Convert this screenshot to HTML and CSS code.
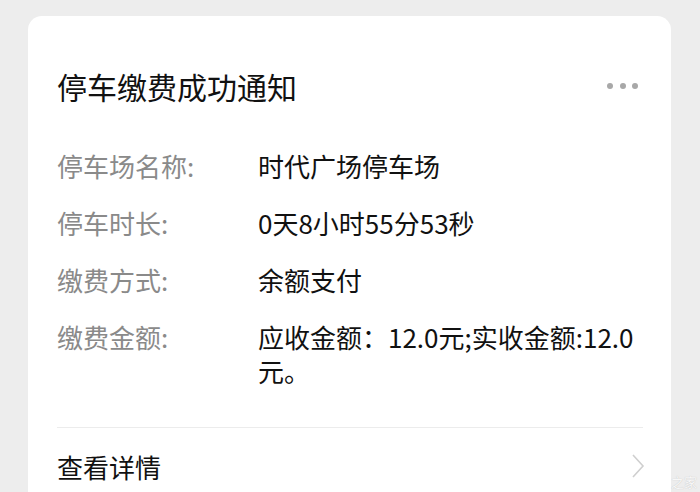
FILE: index.html
```html
<!DOCTYPE html>
<html lang="zh-CN">
<head>
    <meta charset="UTF-8">
    <meta name="viewport" content="width=device-width, initial-scale=1.0">
    <title>停车缴费成功通知</title>
    <link rel="stylesheet" href="styles.css">
</head>
<body>
    <div class="card">
        <div class="card-header">
            <h1>停车缴费成功通知</h1>
            <div class="more">
                <span></span><span></span><span></span>
            </div>
        </div>

        <div class="info-list">
            <div class="info-row">
                <div class="info-label">停车场名称:</div>
                <div class="info-value">时代广场停车场</div>
            </div>
            <div class="info-row">
                <div class="info-label">停车时长:</div>
                <div class="info-value">0天8小时55分53秒</div>
            </div>
            <div class="info-row">
                <div class="info-label">缴费方式:</div>
                <div class="info-value">余额支付</div>
            </div>
            <div class="info-row">
                <div class="info-label">缴费金额:</div>
                <div class="info-value">应收金额：12.0元;实收金额:12.0元。</div>
            </div>
        </div>

        <div class="card-footer">
            <span>查看详情</span>
            <svg class="chevron" width="14" height="26" viewBox="0 0 14 26">
                <path d="M2 2 L12 13 L2 24" fill="none" stroke="#cfcfcf" stroke-width="1.6"/>
            </svg>
        </div>
    </div>

    <div class="watermark">之家</div>
</body>
</html>
```

FILE: styles.css
```css
* {
    margin: 0;
    padding: 0;
    box-sizing: border-box;
}

body {
    font-family: "Noto Sans CJK SC", "Noto Sans", sans-serif;
    background: #ededed;
    width: 700px;
    height: 492px;
    overflow: hidden;
    padding-top: 16px;
    position: relative;
}

.card {
    margin: 0 29px 0 28px;
    background: #fff;
    border-radius: 14px 14px 0 0;
    padding: 0 28px 0 29px;
    height: 500px;
}

.card-header {
    display: flex;
    justify-content: space-between;
    align-items: center;
    padding-top: 50px;
}

.card-header h1 {
    font-size: 30px;
    font-weight: normal;
    line-height: 40px;
    color: #111;
}

.more {
    display: flex;
    gap: 6.5px;
    margin-right: 5px;
}

.more span {
    width: 6px;
    height: 6px;
    border-radius: 50%;
    background: #a8a8a8;
}

.info-list {
    padding-top: 43px;
    padding-bottom: 39px;
    border-bottom: 1px solid #ececec;
}

.info-row {
    display: flex;
    margin-bottom: 23px;
}

.info-row:last-child {
    margin-bottom: 0;
}

.info-label {
    width: 201px;
    flex-shrink: 0;
    font-size: 26px;
    line-height: 34px;
    color: #8a8a8a;
}

.info-value {
    flex: 1;
    font-size: 26px;
    line-height: 34px;
    color: #111;
    word-break: break-all;
}

.card-footer {
    display: flex;
    justify-content: space-between;
    align-items: center;
    height: 76px;
    font-size: 26px;
    color: #111;
}

.chevron {
    margin-right: -2px;
}

.watermark {
    position: absolute;
    right: 3px;
    bottom: 1px;
    font-size: 13px;
    color: #f7f7f7;
    text-shadow: 0 0 1px #bbb;
}
```
